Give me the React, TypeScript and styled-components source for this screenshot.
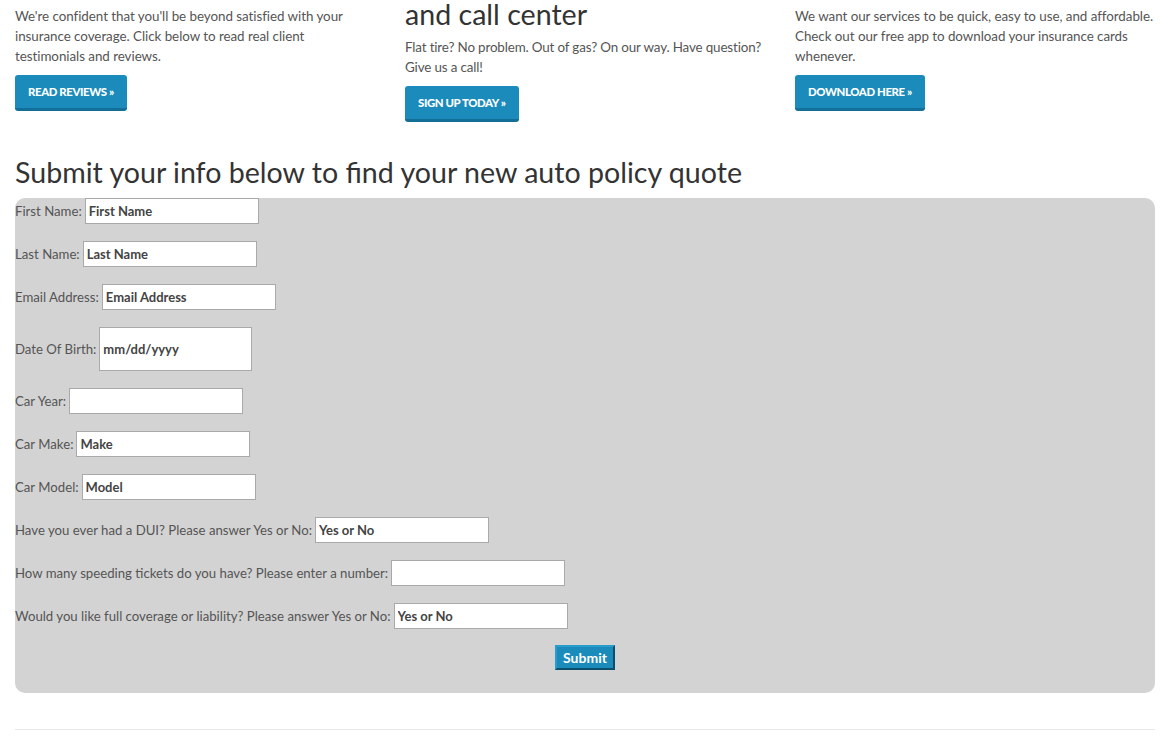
import React from "react";
import styled, { createGlobalStyle } from "styled-components";

const GlobalStyle = createGlobalStyle`
  html, body { margin: 0; padding: 0; background: #fff; }
  body {
    font-family: Lato, "Liberation Sans", Arial, sans-serif;
    color: #555;
    overflow: hidden;
  }
  * { box-sizing: border-box; }
`;

const Page = styled.div`
  width: 1170px;
`;

const Features = styled.div`
  display: grid;
  grid-template-columns: repeat(3, 390px);
`;

const Feature = styled.div<{ $top: number }>`
  padding: ${(p) => p.$top}px 15px 0;
`;

const FeatureTitle = styled.h2`
  margin: 0 0 9px;
  font-size: 28.6px;
  line-height: 28px;
  font-weight: 400;
  color: #333;
`;

const Text = styled.p<{ $tight?: boolean }>`
  margin: 0 0 9px;
  font-size: 13.4px;
  line-height: 20px;
  letter-spacing: ${(p) => (p.$tight ? "-0.15px" : "-0.05px")};
  color: #555;
`;

const ActionButton = styled.a`
  display: inline-block;
  padding: 10px 13px 9px;
  background: #1a8bbb;
  border-bottom: 3px solid #136f98;
  border-radius: 3px;
  color: #fff;
  font-size: 11.4px;
  line-height: 14px;
  font-weight: 900;
  letter-spacing: -0.4px;
  text-transform: uppercase;
  text-decoration: none;
`;

const Section = styled.section`
  padding: 0 15px;
`;

const FormTitle = styled.h2`
  margin: 32px 0 8px;
  font-size: 28.6px;
  line-height: 36px;
  font-weight: 400;
  color: #333;
`;

const QuoteForm = styled.form`
  background: #d3d3d3;
  border-radius: 10px;
  padding: 0 0 23px;
  display: flex;
  flex-direction: column;
  gap: 17px;
`;

const Row = styled.label`
  display: flex;
  align-items: center;
  gap: 3px;
  font-size: 13.2px;
  color: #555;
`;

const Field = styled.input<{ $w?: number; $h?: number }>`
  width: ${(p) => p.$w ?? 174}px;
  height: ${(p) => p.$h ?? 26}px;
  border: 1px solid #a9a9a9;
  background: #fff;
  padding: 0 3px;
  font-family: inherit;
  font-size: 13px;
  font-weight: 700;
  color: #444;
  outline: none;
  &::placeholder {
    color: #444;
    font-weight: 700;
    opacity: 1;
  }
`;

const SubmitRow = styled.div`
  display: flex;
  justify-content: center;
  margin-top: -1px;
`;

const SubmitButton = styled.button`
  width: 60px;
  height: 25px;
  background: #1a8bbb;
  border: 2px solid;
  border-color: #2a9ccc #0b4f6d #0b4f6d #2a9ccc;
  color: #fff;
  font-family: inherit;
  font-size: 14px;
  font-weight: 700;
  padding: 0;
  cursor: pointer;
`;

const Divider = styled.hr`
  margin: 36px 15px 0;
  border: 0;
  border-top: 1px solid #e8e8e8;
`;

const fields: { label: string; placeholder: string; w?: number; h?: number }[] = [
  { label: "First Name:", placeholder: "First Name" },
  { label: "Last Name:", placeholder: "Last Name" },
  { label: "Email Address:", placeholder: "Email Address" },
  { label: "Date Of Birth:", placeholder: "mm/dd/yyyy", w: 153, h: 44 },
  { label: "Car Year:", placeholder: "" },
  { label: "Car Make:", placeholder: "Make" },
  { label: "Car Model:", placeholder: "Model" },
  { label: "Have you ever had a DUI? Please answer Yes or No:", placeholder: "Yes or No" },
  { label: "How many speeding tickets do you have? Please enter a number:", placeholder: "" },
  { label: "Would you like full coverage or liability? Please answer Yes or No:", placeholder: "Yes or No" },
];

export default function App() {
  return (
    <Page>
      <GlobalStyle />
      <Features>
        <Feature $top={6}>
          <Text>
            We're confident that you'll be beyond satisfied with your insurance coverage. Click below to read real client
            testimonials and reviews.
          </Text>
          <ActionButton href="#">Read Reviews »</ActionButton>
        </Feature>
        <Feature $top={0}>
          <FeatureTitle>and call center</FeatureTitle>
          <Text $tight>Flat tire? No problem. Out of gas? On our way. Have question? Give us a call!</Text>
          <ActionButton href="#">Sign Up Today »</ActionButton>
        </Feature>
        <Feature $top={6}>
          <Text>
            We want our services to be quick, easy to use, and affordable. Check out our free app to download your
            insurance cards whenever.
          </Text>
          <ActionButton href="#">Download Here »</ActionButton>
        </Feature>
      </Features>
      <Section>
        <FormTitle>Submit your info below to find your new auto policy quote</FormTitle>
        <QuoteForm onSubmit={(e) => e.preventDefault()}>
          {fields.map((f) => (
            <Row key={f.label}>
              {f.label}
              <Field type="text" placeholder={f.placeholder} $w={f.w} $h={f.h} />
            </Row>
          ))}
          <SubmitRow>
            <SubmitButton type="submit">Submit</SubmitButton>
          </SubmitRow>
        </QuoteForm>
      </Section>
      <Divider />
    </Page>
  );
}
